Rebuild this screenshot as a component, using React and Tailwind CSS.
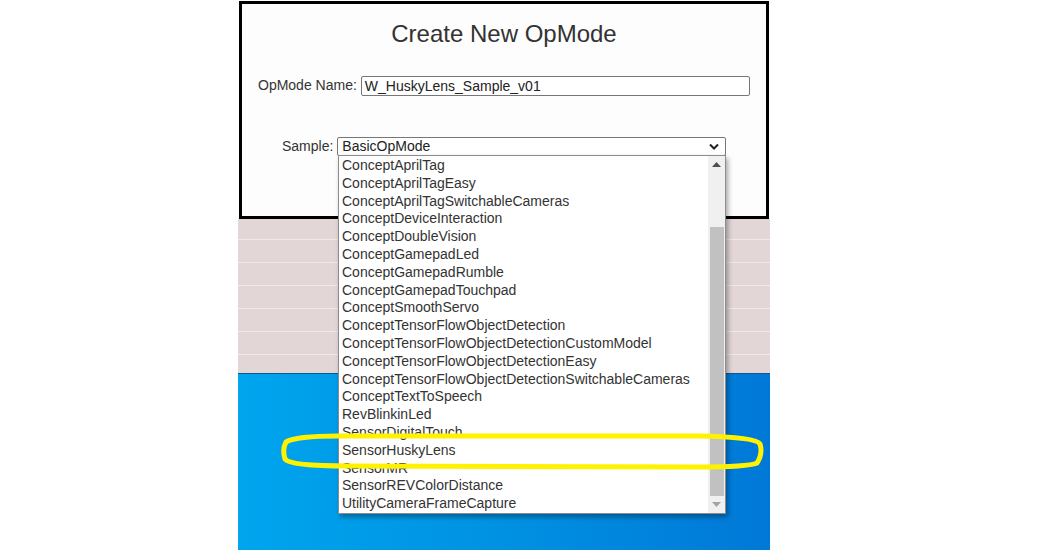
import React from "react";

const samples = [
  "ConceptAprilTag",
  "ConceptAprilTagEasy",
  "ConceptAprilTagSwitchableCameras",
  "ConceptDeviceInteraction",
  "ConceptDoubleVision",
  "ConceptGamepadLed",
  "ConceptGamepadRumble",
  "ConceptGamepadTouchpad",
  "ConceptSmoothServo",
  "ConceptTensorFlowObjectDetection",
  "ConceptTensorFlowObjectDetectionCustomModel",
  "ConceptTensorFlowObjectDetectionEasy",
  "ConceptTensorFlowObjectDetectionSwitchableCameras",
  "ConceptTextToSpeech",
  "RevBlinkinLed",
  "SensorDigitalTouch",
  "SensorHuskyLens",
  "SensorMR",
  "SensorREVColorDistance",
  "UtilityCameraFrameCapture",
];

const App = () => {
  return (
    <div
      className="w-[1042px] h-[550px] bg-white overflow-hidden relative"
      style={{ fontFamily: '"Liberation Sans", Arial, sans-serif' }}
    >
      <div className="ml-[238px] w-[532px] h-[550px] flex flex-col">
        {/* dialog */}
        <div className="mt-[1px] ml-[1px] w-[530px] h-[218px] border-[3px] border-black bg-[#fdfdfd] flex flex-col">
          <h2 className="text-center text-[24px] text-[#333] mt-[15px] leading-[30px]">
            Create New OpMode
          </h2>
          <div className="flex items-center mt-[26px] ml-[16px] text-[14px] text-[#333]">
            <span className="mr-[4px]">OpMode Name:</span>
            <div className="w-[389px] h-[20px] border border-[#767676] rounded-[2px] bg-white px-[3px] text-[14px] leading-[18px] text-[#222]">
              W_HuskyLens_Sample_v01
            </div>
          </div>
          <div className="flex items-center mt-[40px] ml-[40px] text-[14px] text-[#333]">
            <span className="mr-[4px]">Sample:</span>
            <div className="w-[389px] h-[19px] border border-[#767676] rounded-[2px] bg-white pl-[4px] pr-[6px] flex items-center justify-between text-[14px] text-[#222]">
              <span>BasicOpMode</span>
              <svg width="10" height="7" viewBox="0 0 10 7">
                <path d="M1 1.5 L5 5.5 L9 1.5" stroke="#222" strokeWidth="2" fill="none" />
              </svg>
            </div>
          </div>
        </div>

        {/* striped band */}
        <div className="h-[154px] bg-[#e3d6d7] flex flex-col pt-[20px] gap-[22px]">
          {[0, 1, 2, 3, 4, 5].map((i) => (
            <div key={i} className="h-px bg-[#eeeaea]" />
          ))}
        </div>

        {/* desktop */}
        <div className="flex-1 bg-gradient-to-r from-[#00a5ee] via-[#0091e2] to-[#0078d7] border-t border-[#0a5a8f]" />
      </div>

      {/* dropdown list */}
      <div className="absolute left-[338px] top-[155px] w-[388px] h-[359px] bg-white border border-[#8c8c8c] shadow-[2px_3px_5px_rgba(0,0,0,0.35)] flex">
        <div className="flex-1 flex flex-col pl-[3px] pt-[1px]">
          {samples.map((s) => (
            <div key={s} className="h-[17.8px] leading-[17px] text-[14px] text-[#333] whitespace-nowrap overflow-hidden">
              {s}
            </div>
          ))}
        </div>
        <div className="w-[17px] bg-[#f0f0f0] flex flex-col items-center">
          <div className="h-[17px] flex items-center justify-center">
            <svg width="9" height="5" viewBox="0 0 9 5">
              <path d="M0 5 L4.5 0 L9 5 Z" fill="#505050" />
            </svg>
          </div>
          <div className="w-[15px] h-[54px]" />
          <div className="w-[14px] h-[269px] bg-[#c1c1c1]" />
          <div className="flex-1 flex items-center justify-center">
            <svg width="9" height="5" viewBox="0 0 9 5">
              <path d="M0 0 L4.5 5 L9 0 Z" fill="#a3a3a3" />
            </svg>
          </div>
        </div>
      </div>

      {/* highlight annotation */}
      <svg className="absolute left-[278px] top-[432px]" width="490" height="40" viewBox="0 0 490 40">
        <path
          d="M60 4 L420 4 Q478 5 482 12 Q485 22 479 31 Q470 35 420 35 L70 34 Q12 34 7 27 Q4 17 8 10 Q18 4 60 4 Z"
          fill="none"
          stroke="#fff200"
          strokeWidth="5"
        />
      </svg>
    </div>
  );
};

export default App;
